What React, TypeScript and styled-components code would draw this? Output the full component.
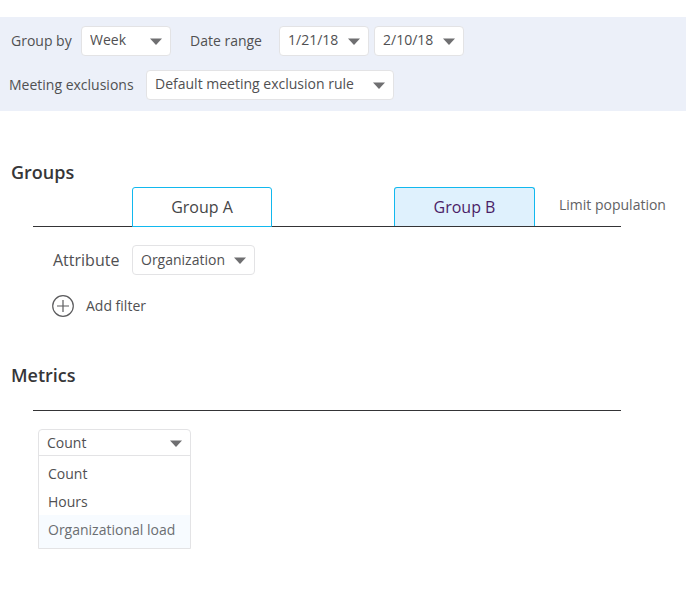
import React, { useState } from "react";
import styled, { createGlobalStyle } from "styled-components";

const GlobalStyle = createGlobalStyle`
  *, *::before, *::after { box-sizing: border-box; }
  body {
    margin: 0;
    background: #fff;
    color: #505052;
    font-family: "Open Sans", "Noto Sans", sans-serif;
    font-size: 14px;
    line-height: 20px;
  }
  button, select { font: inherit; color: inherit; }
`;

const Page = styled.main`
  padding: 17px 0 40px;
`;

const FilterBar = styled.section`
  display: flex;
  flex-direction: column;
  gap: 14px;
  padding: 9px 9px 11px;
  background: #ecf0f9;
`;

const FilterRow = styled.div<{ $indent?: number }>`
  display: flex;
  align-items: center;
  padding-left: ${(p) => p.$indent ?? 0}px;
`;

const FieldLabel = styled.label<{ $width: number; $large?: boolean }>`
  flex: none;
  width: ${(p) => p.$width}px;
  white-space: nowrap;
  font-size: ${(p) => (p.$large ? 16 : 14)}px;
`;

const SelectBox = styled.span<{ $width: number; $gap?: number }>`
  display: grid;
  align-items: center;
  flex: none;
  width: ${(p) => p.$width}px;
  height: 30px;
  margin-right: ${(p) => p.$gap ?? 0}px;
  border: 1px solid #e3e3e5;
  border-radius: 4px;
  background: #fff;
`;

const NativeSelect = styled.select`
  grid-area: 1 / 1;
  width: 100%;
  height: 100%;
  padding: 0 8px;
  border: 0;
  background: transparent;
  appearance: none;
  cursor: pointer;

  ${FilterBar} & {
    padding-bottom: 2px;
  }
`;

const ArrowIcon = styled.svg`
  grid-area: 1 / 1;
  justify-self: end;
  width: 12px;
  height: 7px;
  margin-right: 8px;
  fill: #6f6f71;
  pointer-events: none;
`;

const Arrow = () => (
  <ArrowIcon viewBox="0 0 12 7" aria-hidden="true">
    <path d="M0 .5h12L6 7z" />
  </ArrowIcon>
);

const SectionTitle = styled.h2`
  margin: 0;
  padding-left: 11px;
  color: #363638;
  font-size: 18px;
  font-weight: 600;
  line-height: 26px;
`;

const GroupsSection = styled.section`
  padding-top: 48px;
`;

const TabRow = styled.div`
  display: flex;
  margin: 2px 65px 0 33px;
  padding-left: 99px;
  border-bottom: 1px solid #343436;
`;

const Tab = styled.button<{ $tinted?: boolean }>`
  z-index: 1;
  flex: none;
  width: ${(p) => (p.$tinted ? 141 : 140)}px;
  height: ${(p) => (p.$tinted ? 39 : 40)}px;
  margin-right: ${(p) => (p.$tinted ? 24 : 122)}px;
  margin-bottom: ${(p) => (p.$tinted ? 0 : -1)}px;
  padding: 0;
  border: 1px solid #12b8ee;
  border-bottom-width: ${(p) => (p.$tinted ? 0 : 1)}px;
  border-radius: 3px 3px 0 0;
  background: ${(p) => (p.$tinted ? "#dff1fd" : "#fff")};
  color: ${(p) => (p.$tinted ? "#4b1d67" : "#454547")};
  font-size: 16px;
  cursor: pointer;
`;

const LimitLink = styled.a`
  align-self: center;
  flex: none;
  padding-bottom: 3px;
  color: #626264;
  text-decoration: none;
  white-space: nowrap;
`;

const GroupBody = styled.div`
  display: flex;
  flex-direction: column;
  align-items: flex-start;
  gap: 20px;
  padding: 18px 0 0 53px;
`;

const AddButton = styled.button`
  display: flex;
  align-items: center;
  gap: 12px;
  margin-left: -1px;
  padding: 0;
  border: 0;
  background: transparent;
  cursor: pointer;
`;

const AddIcon = styled.svg`
  width: 22px;
  height: 22px;
  fill: none;
  stroke: #5c5c5e;
`;

const MetricsSection = styled.section`
  padding-top: 45px;
`;

const Rule = styled.hr`
  height: 1px;
  margin: 22px 65px 0 33px;
  border: 0;
  background: #343436;
`;

const Dropdown = styled.div`
  width: 153px;
  margin: 18px 0 0 38px;
  border: 1px solid #e3e3e5;
  border-radius: 4px 4px 0 0;
`;

const DropdownHead = styled.div`
  display: grid;
  align-items: center;
  height: 26px;
  padding-top: 1px;
  border-bottom: 1px solid #e3e3e5;
`;

const OptionList = styled.ul`
  margin: 0;
  padding: 3px 0 0;
  list-style: none;
`;

const Option = styled.button<{ $highlighted: boolean }>`
  display: block;
  width: 100%;
  height: ${(p) => (p.$highlighted ? 33 : 28)}px;
  padding: ${(p) => (p.$highlighted ? "0 9px 4px" : "1px 9px 0")};
  border: 0;
  background: ${(p) => (p.$highlighted ? "#f7fbff" : "#fff")};
  color: ${(p) => (p.$highlighted ? "#6b6e72" : "#505052")};
  text-align: left;
  white-space: nowrap;
  cursor: pointer;
`;

type PickerProps = { id: string; value: string; width: number; gap?: number; label?: string };

const Picker = ({ id, value, width, gap, label }: PickerProps) => (
  <SelectBox $width={width} $gap={gap}>
    <NativeSelect id={id} defaultValue={value} aria-label={label}>
      <option>{value}</option>
    </NativeSelect>
    <Arrow />
  </SelectBox>
);

const metrics = ["Count", "Hours", "Organizational load"];

export default function App() {
  const [metric, setMetric] = useState("Count");
  return (
    <>
      <GlobalStyle />
      <Page>
        <FilterBar>
          <FilterRow $indent={2}>
            <FieldLabel htmlFor="group-by" $width={70}>Group by</FieldLabel>
            <Picker id="group-by" value="Week" width={90} gap={19} />
            <FieldLabel htmlFor="range-start" $width={89}>Date range</FieldLabel>
            <Picker id="range-start" value="1/21/18" width={90} gap={5} />
            <Picker id="range-end" value="2/10/18" width={90} label="Date range end" />
          </FilterRow>
          <FilterRow>
            <FieldLabel htmlFor="exclusions" $width={137}>Meeting exclusions</FieldLabel>
            <Picker id="exclusions" value="Default meeting exclusion rule" width={248} />
          </FilterRow>
        </FilterBar>

        <GroupsSection>
          <SectionTitle>Groups</SectionTitle>
          <TabRow>
            <Tab type="button">Group A</Tab>
            <Tab type="button" $tinted>Group B</Tab>
            <LimitLink href="#limit-population">Limit population</LimitLink>
          </TabRow>
          <GroupBody>
            <FilterRow>
              <FieldLabel htmlFor="attribute" $width={79} $large>Attribute</FieldLabel>
              <Picker id="attribute" value="Organization" width={123} />
            </FilterRow>
            <AddButton type="button">
              <AddIcon viewBox="0 0 22 22" aria-hidden="true">
                <circle cx="11" cy="11" r="10.3" strokeWidth="1.2" />
                <path d="M11 5v12M5 11h12" strokeWidth="1.2" />
              </AddIcon>
              Add filter
            </AddButton>
          </GroupBody>
        </GroupsSection>

        <MetricsSection>
          <SectionTitle>Metrics</SectionTitle>
          <Rule />
          <Dropdown>
            <DropdownHead>
              <NativeSelect
                aria-label="Metric"
                value={metric}
                onChange={(e) => setMetric(e.target.value)}
              >
                {metrics.map((m) => (
                  <option key={m}>{m}</option>
                ))}
              </NativeSelect>
              <Arrow />
            </DropdownHead>
            <OptionList>
              {metrics.map((m) => (
                <li key={m}>
                  <Option
                    type="button"
                    $highlighted={m === "Organizational load"}
                    onClick={() => setMetric(m)}
                  >
                    {m}
                  </Option>
                </li>
              ))}
            </OptionList>
          </Dropdown>
        </MetricsSection>
      </Page>
    </>
  );
}
